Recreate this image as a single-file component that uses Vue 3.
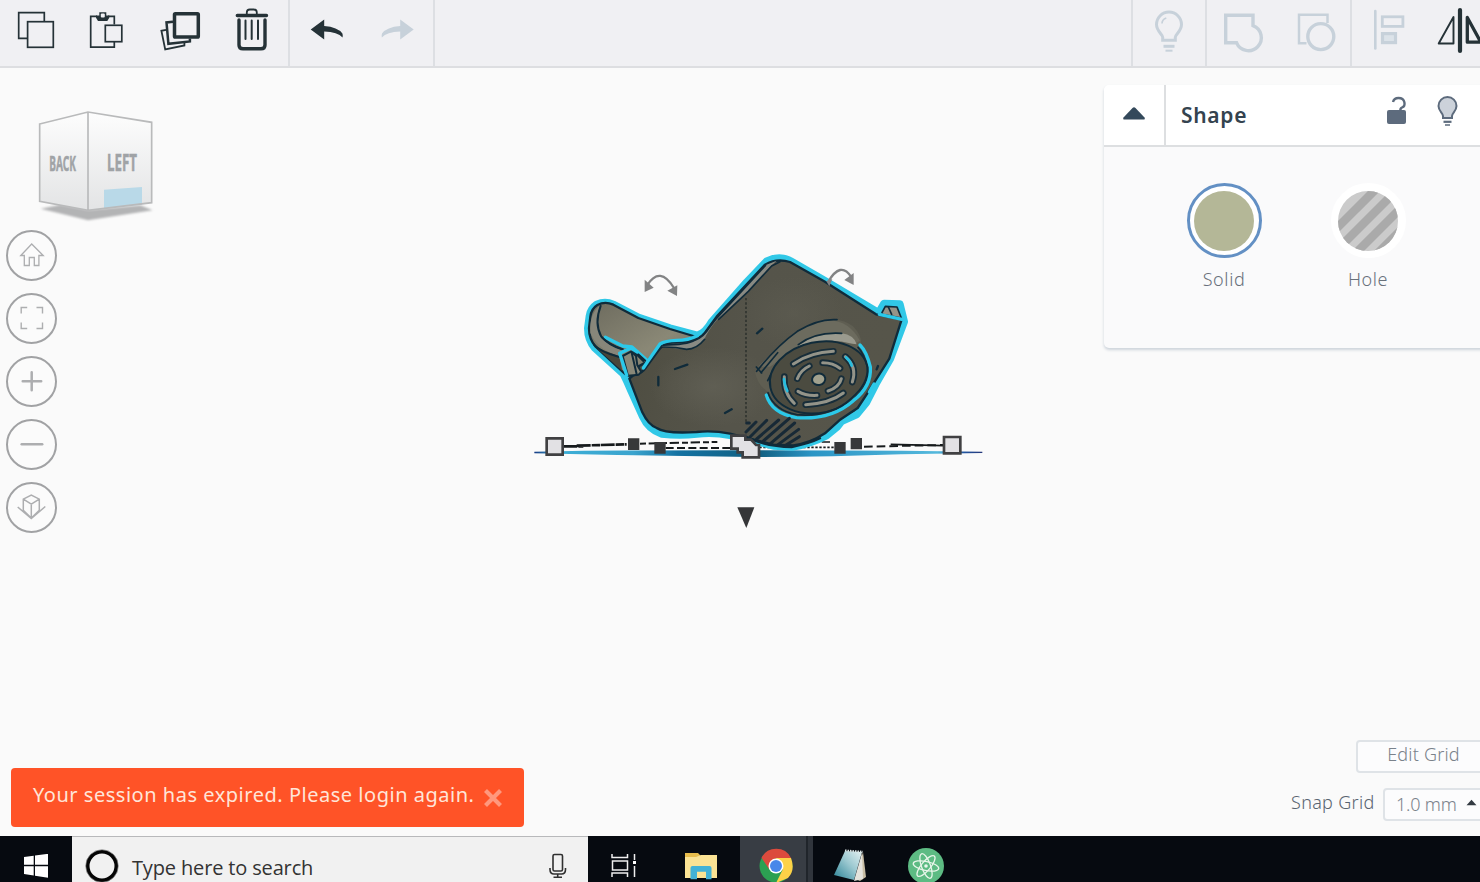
<script setup>
const fileTools = [
  { id: 'copy', x: 0 },
  { id: 'paste', x: 72 },
  { id: 'duplicate', x: 144 },
  { id: 'delete', x: 216 },
]
const views = ['home', 'fit', 'plus', 'minus', 'ortho']
const slots = 'M640 342Q690 307 760 304M796 320Q832 350 817 396M613 380Q610 430 643 460M677 464Q750 460 790 429M652 386Q662 360 688 348M728 338Q760 338 780 355M654 424Q678 438 711 436M744 423Q778 412 784 386'
</script>

<template>
  <div class="app">
    <header class="toolbar">
      <div class="group files">
        <svg v-for="t in fileTools" :key="t.id" class="tool" width="72" height="66" :viewBox="`${t.x} 0 72 66`">
          <g v-if="t.id === 'copy'" class="line thin">
            <path d="M27 38.300H18.700V12.700H44.300V21" /><rect x="27.600" y="21.700" width="25.700" height="25.600" />
          </g>
          <g v-else-if="t.id === 'paste'" class="line thin">
            <path d="M105 47.200H90.700V16.300H97M108 16.300H114.300V24.500M114.300 42V47.200H103" />
            <rect x="105.300" y="25.300" width="16.500" height="16.400" />
            <path class="ink" d="M96 15.500h3.300v-3.200h7v3.200h3v2.200l-2 3.300h-9.300l-2-3.300z" stroke="none" />
            <rect class="paper" x="100.800" y="13.600" width="4" height="4" rx="1" stroke="none" />
          </g>
          <g v-else-if="t.id === 'duplicate'" class="line">
            <path d="M166 29.800l-4.600 1 3.800 18.700 19.200-4v-3" stroke-width="1.800" />
            <path d="M173 21.700l-6.500.7 1.900 21.400 21.500-2.400v-3" stroke-width="2.500" />
            <rect class="paper" x="174.500" y="13.700" width="23.800" height="23.400" rx=".8" stroke-width="3.500" />
          </g>
          <g v-else class="line">
            <path d="M246.800 14v-1.500q0-3 3-3h4q3 0 3 3V14" stroke-width="1.800" />
            <path d="M237.300 15.500h29.200M239 20v25q0 3.800 4 3.800h18q4 0 4-3.800V20" stroke-width="3.400" stroke-linecap="round" />
            <path d="M245.500 20.500v18.500M251.700 20.500v18.500M258 20.500v18.500" stroke-width="2" stroke-linecap="round" />
          </g>
        </svg>
      </div>
      <div class="group history">
        <svg width="72" height="66" viewBox="290 0 72 66"><path class="ink" d="M310.700 29.500l13.500-10v6.400q13.500 1 18.200 7.500.6 1.300.2 4.200-5-5.500-18.400-6v8z" /></svg>
        <svg width="71" height="66" viewBox="362 0 71 66"><path class="faded" d="M413.700 29.500l-13.500-10v6.400q-13.500 1-18.200 7.500-.6 1.300-.2 4.200 5-5.500 18.400-6v8z" /></svg>
      </div>
      <div class="spacer"></div>
      <div class="group bulb">
        <svg width="73" height="66" viewBox="1133 0 73 66" class="soft">
          <path d="M1162.700 40.300v-3c0-3-6.200-6-6.200-12.700a12.500 12.500 0 0 1 25 0c0 6.700-6.200 9.700-6.200 12.700v3z" stroke-width="3" />
          <path d="M1162 23.500q0-4 4.300-5.500" stroke-width="1.700" />
          <path d="M1163.500 46.300h11" stroke-width="3" /><path d="M1165.500 50.700h7" stroke-width="2" />
        </svg>
      </div>
      <div class="group combine">
        <svg width="72" height="66" viewBox="1207 0 72 66" class="soft"><path d="M1225.700 15.300h27.300v10.400a12.900 12.900 0 1 1-16.500 17h-10.800z" stroke-width="3.400" /></svg>
        <svg width="71" height="66" viewBox="1279 0 71 66" class="soft"><path d="M1306.500 43.200h-7.500V14.800h28.500V23" stroke-width="2.500" /><circle cx="1320.800" cy="36.600" r="13" stroke-width="3.400" /></svg>
      </div>
      <div class="group align">
        <svg width="72" height="66" viewBox="1352 0 72 66" class="soft">
          <path d="M1375.300 11v37.500" stroke-width="2.600" stroke-linecap="round" /><rect x="1382.300" y="16.800" width="20.600" height="9.600" stroke-width="2.800" />
          <rect x="1382.500" y="33.600" width="13" height="9" stroke-width="3.200" fill="#dce3e9" />
        </svg>
        <svg width="56" height="66" viewBox="1424 0 56 66" class="line">
          <path d="M1453.500 17v26.500h-14.800z" stroke-width="1.900" stroke-linejoin="round" />
          <path d="M1460 10v41" stroke-width="4.200" stroke-linecap="round" /><path d="M1467.300 17.500v24.700h13.500z" stroke-width="3.300" stroke-linejoin="round" />
        </svg>
      </div>
    </header>

    <main class="workspace">
      <svg class="scene" width="1480" height="768" viewBox="0 68 1480 768">
        <defs>
          <linearGradient id="body" x1="0" y1="0" x2="1" y2=".15">
            <stop offset="0" stop-color="#4c4b3f" /><stop offset=".25" stop-color="#525146" /><stop offset=".48" stop-color="#55544a" /><stop offset="1" stop-color="#56554a" />
          </linearGradient>
          <linearGradient id="strap" x1="0" y1="0" x2="1" y2="1">
            <stop offset="0" stop-color="#6d6b5e" /><stop offset=".6" stop-color="#8a8876" /><stop offset="1" stop-color="#6d6b5c" />
          </linearGradient>
          <radialGradient id="shine"><stop offset="0" stop-color="#626156" /><stop offset="1" stop-color="#626156" stop-opacity="0" /></radialGradient>
          <linearGradient id="plane" x1="0" x2="1">
            <stop offset="0" stop-color="#173a83" /><stop offset=".05" stop-color="#3caed6" /><stop offset=".22" stop-color="#3ba4ce" /><stop offset=".32" stop-color="#1472a2" /><stop offset=".5" stop-color="#115f80" /><stop offset=".62" stop-color="#2b95c5" /><stop offset=".9" stop-color="#54b8dc" /><stop offset=".96" stop-color="#2255a0" /><stop offset="1" stop-color="#253779" />
          </linearGradient>
          <linearGradient id="cubeface" x1="0" y1="0" x2="0" y2="1"><stop offset="0" stop-color="#fdfdfd" /><stop offset="1" stop-color="#e3e4e5" /></linearGradient>
          <filter id="soften" x="-20%" y="-20%" width="140%" height="140%"><feGaussianBlur stdDeviation="2.500" /></filter>
        </defs>

        <!-- orientation cube -->
        <g transform="translate(0 90) scale(.33333)">
          <path d="M122 356l60-12 84 16 155-14 37 15-194 30z" fill="#b3b4b5" filter="url(#soften)" />
          <path d="M119 102l145-36v295l-145-27z" fill="url(#cubeface)" />
          <path d="M264 66l191 31v241l-191 23z" fill="url(#cubeface)" />
          <path d="M312 299l114-8v53l-114 11z" fill="#b9d9e8" />
          <path d="M119 102l145-36 191 31v241l-191 23-145-27zM264 66v295" fill="none" stroke="#b9babb" stroke-width="5" />
          <text class="cubetext" x="148" y="244" font-size="66" textLength="80" lengthAdjust="spacingAndGlyphs">BACK</text>
          <text class="cubetext" x="321" y="243" font-size="72" textLength="90" lengthAdjust="spacingAndGlyphs">LEFT</text>
        </g>

        <!-- work plane and dimension guides -->
        <g transform="translate(520 420) scale(.33333)">
          <path d="M43 95l150-3q500-2 950 0l244 3v4l-244 4q-220 8-450 8l-400-6-250-5z" fill="url(#plane)" />
          <path d="M130 79h60M170 77l150-4" class="guide" stroke-width="8" stroke-dasharray="42 3 25 2" />
          <path d="M360 71l232-5" class="guide" stroke-width="6" stroke-dasharray="18 8 28 9" />
          <path d="M437 84h225" class="guide" stroke-width="6" stroke-dasharray="24 10" />
          <path d="M720 66h210" class="guide" stroke-width="5" stroke-dasharray="30 7" />
          <path d="M718 82h225" class="guide" stroke-width="5" stroke-dasharray="7 5" />
          <path d="M1032 80l238-5" class="guide" stroke-width="6" stroke-dasharray="26 12" /><path d="M1112 73l158 4" class="guide" stroke-width="5" />
        </g>

        <!-- respirator model -->
        <g transform="translate(580 250) scale(.33333)" stroke-linejoin="round" stroke-linecap="round">
          <path class="halo" d="M352 256L270 234 175 202 100 163Q75 152 50 163 31 176 28 198L23 235Q23 270 44 294L130 372Q142 396 150 416L188 500Q205 538 245 552 300 558 350 552 400 546 450 556L525 573 580 588 640 591Q690 582 740 557L773 530 785 514 830 494 860 457 888 402 932 325 973 215 960 162 912 160 896 188 735 92 635 34Q600 14 560 33L500 96 395 215Q375 250 352 256Z" />

          <!-- rear strap -->
          <path class="edge" fill="url(#strap)" d="M350 261L270 237 175 204 100 164Q75 153 52 165 34 176 31 200L27 235Q27 268 47 290L135 372 200 335 240 290Z" />
          <path d="M58 168Q44 215 61 256 80 282 128 296L118 322Q48 293 31 248 27 195 58 168Z" fill="#87867a" />
          <path d="M46 291l72 28 9 44z" fill="#48463a" />
          <path class="edge mid" fill="none" d="M62 168Q42 220 64 260 86 286 126 298M42 284Q60 306 118 321" />
          <path class="glow" d="M76 262L128 288 156 291 200 330" /><path class="edge mid" fill="none" d="M66 262Q88 284 130 298M158 298L196 332" />

          <!-- front shell -->
          <path class="edge" fill="url(#body)" d="M160 376Q186 372 200 350L238 298Q250 280 275 279 320 280 345 268 368 262 382 238L410 200 555 44Q590 24 630 36L735 95 888 193 965 208 928 326 860 433 833 474 778 511 735 550Q690 580 640 586L580 584 525 570 450 551Q400 541 350 546 255 552 230 534 205 525 187 487L148 386Z" />
          <ellipse cx="400" cy="410" rx="190" ry="120" fill="url(#shine)" opacity=".8" />
          <ellipse cx="640" cy="190" rx="150" ry="110" fill="url(#shine)" opacity=".4" />
          <path d="M244 290Q252 282 280 281 320 282 345 270 368 264 384 240L410 202 556 46 590 32 570 50 505 125 410 211Q385 240 372 270 350 299 315 297 275 294 244 290Z" fill="#898a83" />
          <path class="edge fine" fill="none" d="M242 291Q285 290 320 298 350 298 374 268M416 208L505 124 575 48 600 35" />
          <path class="edge mid" fill="none" d="M250 285Q320 285 345 270 370 262 388 232L410 204 556 46" />
          <path class="glow" d="M190 354L205 332 240 282Q255 272 290 271 325 271 352 257" />
          <path class="edge mid" d="M128 318l26-14 14 14 4 28 12 20-8 8-32 3z" fill="#898878" />
          <path class="edge mid" fill="none" d="M155 308l15 65M160 303l30 30" />
          <path class="glow" d="M140 376L119 310 153 294 172 306" />
          <path d="M906 188l10-19 35 2 13 33-58-11z" fill="#969488" class="edge fine" /><path class="edge fine" d="M925 171l10 22" /><path class="glow" d="M898 193L966 208" />

          <!-- filter housing -->
          <path d="M538 360Q630 255 705 222 775 193 819 229 855 267 838 300L635 300 575 430Q535 415 525 367Z" fill="#5f5e52" />
          <path d="M535 350Q640 238 720 214 800 198 840 272L824 282Q740 240 655 290L570 350Z" fill="#6c6b5e" />
          <path d="M652 288Q710 245 785 250 822 255 830 283L817 281Q742 260 652 288Z" fill="#9a9a8e" />
          <path class="edge fine" fill="none" d="M530 364Q590 288 652 244 715 205 771 209M545 369l-16-18M655 284Q705 245 785 250M563 392l10-20M593 308l-50 60" />
          <ellipse class="edge mid" cx="717" cy="382" rx="149" ry="106" transform="rotate(-12 717 382)" fill="#4b4b40" />
          <path class="glow" d="M559 435Q575 490 650 503 755 510 820 452 875 410 871 351 860 305 840 285" />
          <path class="edge fine" fill="none" d="M564 428Q582 480 650 494 750 503 814 445 866 401 862 351 852 310 834 292" />
          <path class="slot" :d="slots" /><path class="slot light" :d="slots" />
          <path d="M798 322q13 10 17 25M612 387q2 22 10 36" stroke="#27bde0" stroke-width="8" fill="none" />
          <ellipse cx="716" cy="388" rx="20" ry="17" class="edge mid" fill="#a1a18e" transform="rotate(-12 716 388)" />
          <path class="edge" fill="none" d="M285 357l37-13M235 381v25M435 489l20-11M531 250l16-14M890 358l4-10" />
          <path class="glow" d="M882 402L868 426" />
          <path d="M498 144V515" stroke="#30342f" stroke-width="5" stroke-dasharray="7 6" stroke-linecap="butt" />
          <path class="hatch" d="M500 519h8M498 546l30-30M510 561l50-50M530 567l66-57M550 573l78-68M572 580l72-61M594 584l62-46M618 585l40-25" />
          <path d="M498 560Q555 590 635 591 690 580 720 565" class="edge" fill="none" />
          <g class="rotate" stroke-linecap="butt">
            <path d="M202 105Q240 46 282 114" /><path d="M194 89v37l27-13zM292 106l-1 32-29-16z" />
            <path d="M744 96Q782 32 813 80" /><path d="M821 69v36l-28-15zM739 94l18-7-9 22z" />
          </g>
        </g>

        <!-- resize handles -->
        <g transform="translate(520 420) scale(.33333)">
          <g fill="#37383a"><path d="M324 55h34v35h-34zM403 66h34v35h-34zM943 66h34v35h-34zM992 54h34v34h-34z" /></g>
          <g fill="#e2e1e4" stroke="#404042" stroke-width="8"><path d="M80 55h48v49H80zM1272 51h49v49h-49zM634 47h42v12h17l15 16h9v37h-49V97h-15V86h-19z" /></g>
          <path d="M652 262h51l-24 62z" fill="#353638" />
        </g>
      </svg>

      <nav class="views">
        <button v-for="v in views" :key="v" class="view">
          <svg width="51" height="51" viewBox="0 0 51 51">
            <path v-if="v === 'home'" d="M14.800 25.500L25.700 14l11.500 11.500h-4.300V35.500h-4.600v-8h-5v8h-5V25.500z" stroke-width="1.300" />
            <path v-else-if="v === 'fit'" d="M15.200 20.500v-6h6M30.500 14.500h6v6M15.200 29.500v6h6M30.500 35.500h6v-6" stroke-width="1.400" />
            <path v-else-if="v === 'plus'" d="M25.700 16.300v18M16.700 25.300h18.500" stroke-width="2.500" stroke-linecap="round" />
            <path v-else-if="v === 'minus'" d="M15.700 25.200h20.500" stroke-width="2.500" stroke-linecap="round" />
            <path v-else d="M17.300 17.200l8-4.200 8 4.200v11l-8 7.800-8-7.800zM17.300 17.200l8 5 8-5M25.300 22.200V36M11.700 25l13.600 11.500L39.300 24.500" stroke-width="1.500" />
          </svg>
        </button>
      </nav>

      <section class="panel">
        <div class="head">
          <div class="fold"><svg width="24" height="14" viewBox="0 0 24 14"><path d="M1.500 11.500L10.500 2q1.500-1.300 3 0L22.500 11.500q1 2-1 2H2.500q-2 0-1-2z" /></svg></div>
          <h2>Shape</h2>
          <div class="headicons">
            <svg width="22" height="30" viewBox="1386 96 22 30"><rect x="1387" y="110" width="19" height="14" rx="2" fill="#5d6b7d" /><path d="M1393 102q1-4 5.500-4c7 0 7.500 8 3.500 9.500-2 1-1.500 3-1.500 3" fill="none" stroke="#5d6b7d" stroke-width="2.400" /></svg>
            <svg width="22" height="32" viewBox="1437 95 22 32"><path d="M1443 118v-2c0-3-4.500-5-4.500-10a9 9 0 0 1 18 0c0 5-4.500 7-4.500 10v2z" fill="#ccd2da" stroke="#5d6b7d" stroke-width="2" /><path d="M1443.500 121.800h8" stroke="#5d6b7d" stroke-width="2.200" /><path d="M1445 125h5" stroke="#5d6b7d" stroke-width="1.500" /></svg>
          </div>
        </div>
        <div class="choices">
          <div class="choice"><span class="ring selected"><i class="swatch"></i></span><span>Solid</span></div>
          <div class="choice"><span class="ring"><svg width="60" height="60"><defs><clipPath id="disc"><circle cx="30" cy="30" r="30" /></clipPath></defs><g clip-path="url(#disc)"><path d="M0 0h60v60H0z" fill="#cbcbcb" /><path d="M-8 44L44-8M-8 66L66-8M4 76L76 4M26 76L76 26" stroke="#aaa" stroke-width="8.500" /></g></svg></span><span>Hole</span></div>
        </div>
      </section>

      <aside class="grid-controls">
        <button class="edit">Edit Grid</button>
        <div class="snap"><span>Snap Grid</span><button>1.0 mm<svg width="11" height="7"><path d="M.5 6.200L5.500.8 10.500 6.200z" fill="#333a42" /></svg></button></div>
      </aside>

      <div class="toast"><span>Your session has expired. Please login again.</span><svg width="20" height="20"><path d="M2.500 2.500l15 15M17.500 2.500l-15 15" /></svg></div>
    </main>

    <footer class="taskbar">
      <div class="start"><svg width="24" height="28" viewBox="24 854 24 28"><path d="M24 857l9.700-1.200v9H24zM35 855.600l13-1.800v11H35zM24 866.200h9.700v9.200L24 874zM35 866.200h13v11.500l-13-1.900z" fill="#fff" /></svg></div>
      <div class="search">
        <svg width="34" height="36" viewBox="85 848 34 36"><circle cx="102" cy="866" r="14.300" fill="none" stroke="#050505" stroke-width="3.600" /><circle cx="102" cy="866" r="16.300" fill="none" stroke="#777" stroke-width=".7" /></svg>
        <span>Type here to search</span>
        <svg class="mic" width="18" height="26" viewBox="549 853 18 26"><rect x="553" y="854.500" width="9.500" height="16.500" rx="1.500" /><path d="M550 868v1.500q0 4.500 4 4.500h7.500q4 0 4-4.500V868M557.700 874v3.500M553.500 877.300h8.500" /></svg>
      </div>
      <div class="apps">
        <svg width="72" height="46" viewBox="588 836 72 46"><path d="M612 854v3.500h15.500V854M612 877v-4h15.500v4M612.500 861h15v9h-15zM634.500 854v6M634.500 866v11" fill="none" stroke="#eee" stroke-width="1.500" /><path d="M633 861h3v3h-3z" fill="#fff" /></svg>
        <svg width="80" height="46" viewBox="660 836 80 46"><path d="M685 853h13l3 3h16v22h-32z" fill="#e8bd4c" /><path d="M685 857h11l5-2h16v23h-32z" fill="#fbe394" /><path d="M690.500 879.200V868q0-2 2-2h17q2 0 2 2v11.200H706v-7.400h-9v7.400z" fill="#42b2d6" /></svg>
        <div class="chrome"><svg width="66" height="46" viewBox="740 836 66 46"><circle cx="776" cy="866" r="16.500" fill="#2ca052" /><path d="M761.500 857.800A16.500 16.500 0 0 1 791 858H776l-7 11z" fill="#dc4a3d" /><path d="M776 858h15q4.500 12-3 20l-12 5 7-14z" fill="#fdd247" /><circle cx="776" cy="866" r="7.500" fill="#fff" /><circle cx="776" cy="866" r="6" fill="#4787e9" /></svg></div>
        <div class="sliver"></div>
        <svg width="74" height="46" viewBox="813 836 74 46"><defs><linearGradient id="note" x1="0" y1="1" x2="1" y2="0"><stop offset="0" stop-color="#2a8396" /><stop offset=".55" stop-color="#9bc8d0" /><stop offset="1" stop-color="#e4f1f2" /></linearGradient></defs><path d="M863 852l3 25-6 4-5-2z" fill="#c7bda4" /><path d="M845 851l17 1-8 28-20-5z" fill="url(#note)" /><path d="M862 853l1 26-9 2z" fill="#e4e3dc" /><path d="M845 850.500l18 1.300" stroke="#d9e4e4" stroke-width="2" stroke-dasharray="1.500 1" /></svg>
        <svg width="78" height="46" viewBox="887 836 78 46"><circle cx="926" cy="866" r="18" fill="#5dbb83" /><g fill="none" stroke="#e8f5e9" stroke-width="1.300"><ellipse cx="926" cy="866" rx="13" ry="4.500" transform="rotate(12 926 866)" /><ellipse cx="926" cy="866" rx="13" ry="4.500" transform="rotate(70 926 866)" /><ellipse cx="926" cy="866" rx="13" ry="4.500" transform="rotate(130 926 866)" /></g><circle cx="926" cy="866" r="1.800" fill="#eaf7ed" /></svg>
      </div>
    </footer>
  </div>
</template>

<style>
body { margin: 0; overflow: hidden; }
</style>
<style scoped>
.app { width: 1480px; height: 882px; display: flex; flex-direction: column; overflow: hidden; background: #fafafa; font-family: "Noto Sans", "Open Sans", sans-serif; }
svg { display: block; flex: none; }
.toolbar { height: 66px; flex: none; display: flex; background: #f0f0f3; border-bottom: 2px solid #dddee1; }
.group { display: flex; box-sizing: border-box; height: 66px; flex: none; border-right: 2px solid #dddfe3; }
.files { width: 290px; }
.history { width: 145px; }
.spacer { width: 696px; border-right: 2px solid #dddfe3; }
.bulb { width: 74px; }
.combine { width: 145px; }
.align { border: 0; }
.line { fill: none; stroke: #253237; }
.thin { stroke-width: 1.700; }
.ink { fill: #253237; }
.paper { fill: #f0f0f3; }
.faded { fill: #c7d1da; }
.soft { fill: none; stroke: #c7d1da; }
.workspace { height: 768px; flex: none; position: relative; overflow: hidden; }
.scene { position: absolute; inset: 0; }
.cubetext { fill: #a0a3a6; stroke: #a0a3a6; stroke-width: 1.500; font-weight: 700; }
.guide { stroke: #161a1c; fill: none; }
.halo { fill: #4d4c41; stroke: #31c8e7; stroke-width: 22; }
.glow { fill: none; stroke: #2bc9ea; stroke-width: 10; }
.edge { stroke: #102b3a; stroke-width: 7; }
.edge.mid { stroke-width: 6; }
.edge.fine { stroke-width: 5; }
.slot { fill: none; stroke: #172d39; stroke-width: 20; }
.slot.light { stroke: #949489; stroke-width: 9; }
.hatch { stroke: #172936; stroke-width: 9; fill: none; }
.rotate path { fill: #828384; }
.rotate path:nth-child(odd) { fill: none; stroke: #828384; stroke-width: 7; }
.views { position: absolute; left: 6px; top: 162px; display: flex; flex-direction: column; gap: 12px; }
.view { width: 51px; height: 51px; box-sizing: border-box; padding: 0; border: 2px solid #a1a2a4; border-radius: 50%; background: #fbfbfb; display: flex; align-items: center; justify-content: center; }
.view svg { fill: none; stroke: #adaeb0; }
.panel { position: absolute; left: 1104px; top: 17px; width: 390px; height: 263px; background: #fafafb; border-radius: 5px; box-shadow: 0 2px 3px #ccd3da; overflow: visible; }
.head { height: 60px; display: flex; align-items: center; border-bottom: 2px solid #dddfe1; background: #fff; border-radius: 5px 0 0; }
.fold { width: 60px; height: 60px; border-right: 2px solid #dddfe1; display: flex; align-items: center; justify-content: center; }
.fold svg { fill: #34495b; margin-bottom: 4px; }
h2 { width: 190px; margin: 0 0 0 15px; font-size: 21px; line-height: 28px; font-weight: 600; letter-spacing: .7px; color: #34434f; }
.headicons { display: flex; align-items: center; gap: 29px; margin: 0 0 8px 15px; }
.choices { display: flex; padding: 36px 0 0 48px; gap: 0; }
.choice { width: 144px; display: flex; flex-direction: column; align-items: center; color: #69717b; font-size: 18px; line-height: 25px; letter-spacing: .6px; font-weight: 300; gap: 9px; }
.ring { width: 75px; height: 75px; box-sizing: border-box; border: 3px solid #fff; border-radius: 50%; background: white; display: flex; align-items: center; justify-content: center; }
.selected { border-color: #6390c4; }
.swatch { width: 60px; height: 60px; border-radius: 50%; background: #b4b797; }
.grid-controls { position: absolute; left: 1291px; top: 672px; width: 220px; color: #596471; font-size: 18px; font-weight: 300; }
button { font: inherit; }
.edit { margin: 0 0 0 65px; box-sizing: border-box; width: 135px; height: 33px; padding: 0 0 5px; border: 2px solid #dfe3e7; border-radius: 4px; background: #fcfcfd; color: #7a828b; letter-spacing: .2px; }
.snap { display: flex; margin-top: 15px; gap: 9px; line-height: 29px; }
.snap > span { width: 83px; letter-spacing: .3px; white-space: nowrap; }
.snap button { box-sizing: border-box; height: 33px; width: 120px; padding: 0 0 0 11px; border: 2px solid #dfe3e7; border-radius: 4px; background: #fcfcfd; display: flex; align-items: center; gap: 9px; color: #7a828b; white-space: nowrap; letter-spacing: -.2px; }
.snap svg { margin-bottom: 4px; }
.toast { position: absolute; left: 11px; top: 700px; width: 513px; height: 59px; box-sizing: border-box; display: flex; align-items: center; padding: 0 21px 7px 22px; gap: 8px; border-radius: 4px; background: #ff5327; color: #ffe5d8; font-size: 20px; letter-spacing: .52px; white-space: nowrap; }
.toast span { width: 442px; }
.toast svg { margin-top: 7px; stroke: #ff987d; stroke-width: 4.200; }
.taskbar { height: 46px; flex: none; background: #060a10; display: flex; overflow: hidden; }
.start { width: 72px; flex: none; display: flex; padding: 18px 0 0 24px; box-sizing: border-box; }
.search { width: 516px; height: 46px; flex: none; box-sizing: border-box; border-top: 1px solid #b8b9bb; background: #f1f1f1; display: flex; align-items: flex-start; color: #333; font-family: "Open Sans", sans-serif; font-size: 20px; padding: 11px 0 0 13px; }
.search > span { width: 417px; margin: 6px 0 0 13px; line-height: 28px; letter-spacing: -.15px; }
.mic { margin-top: 5px; fill: none; stroke: #303030; stroke-width: 1.600; }
.apps { display: flex; }
.chrome { background: #383d44; width: 66px; }
.sliver { width: 7px; box-sizing: border-box; border-left: 2px solid #20252b; background: #30353c; }
</style>
